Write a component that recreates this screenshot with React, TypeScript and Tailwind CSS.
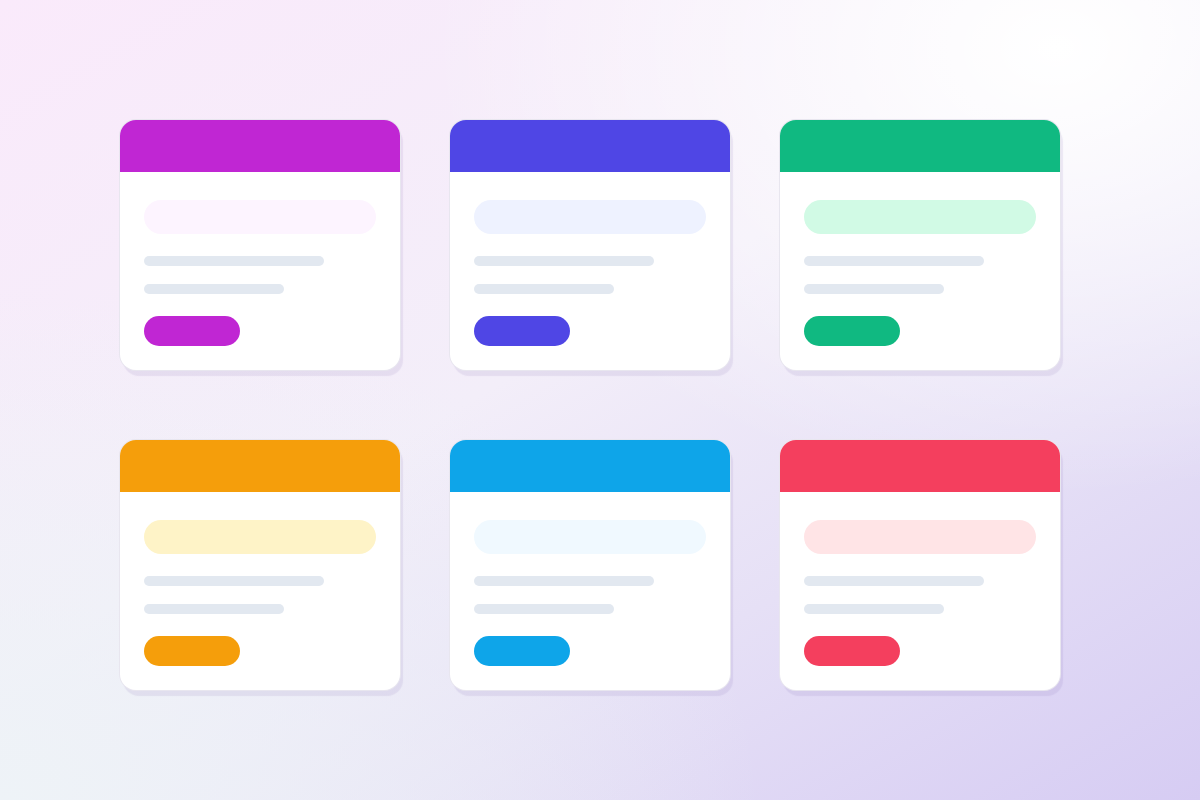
import React from "react";

type Card = { head: string; pill: string; btn: string };

const cards: Card[] = [
  { head: "bg-[#c026d3]", pill: "bg-[#fdf4ff]", btn: "bg-[#c026d3]" },
  { head: "bg-[#4f46e5]", pill: "bg-[#eef2ff]", btn: "bg-[#4f46e5]" },
  { head: "bg-[#10b981]", pill: "bg-[#d1fae5]", btn: "bg-[#10b981]" },
  { head: "bg-[#f59e0b]", pill: "bg-[#fef3c7]", btn: "bg-[#f59e0b]" },
  { head: "bg-[#0ea5e9]", pill: "bg-[#f0f9ff]", btn: "bg-[#0ea5e9]" },
  { head: "bg-[#f43f5e]", pill: "bg-[#ffe4e6]", btn: "bg-[#f43f5e]" },
];

function SkeletonCard({ c }: { c: Card }) {
  return (
    <div className="flex h-[250px] w-[280px] flex-col overflow-hidden rounded-2xl bg-white shadow-[0_0_0_1px_#e8e6ef,3px_6px_1px_rgba(120,100,170,0.12)]">
      <div className={`h-[52px] shrink-0 ${c.head}`} />
      <div className="flex flex-col px-6 pt-7">
        <div className={`h-[34px] w-[232px] rounded-full ${c.pill}`} />
        <div className="mt-[22px] h-[10px] w-[180px] rounded-full bg-[#e2e8f0]" />
        <div className="mt-[18px] h-[10px] w-[140px] rounded-full bg-[#e2e8f0]" />
        <div className={`mt-[22px] h-[30px] w-24 rounded-full ${c.btn}`} />
      </div>
    </div>
  );
}

export default function App() {
  return (
    <div className="h-[800px] w-[1200px] overflow-hidden bg-[radial-gradient(ellipse_at_88%_6%,#ffffff_0%,rgba(255,255,255,0)_42%),radial-gradient(ellipse_at_0%_100%,#eef3f7_0%,rgba(238,243,247,0)_45%),linear-gradient(150deg,#faeafb_0%,#f3eef9_45%,#e6e0f6_70%,#d6ccf3_100%)] pl-[120px] pt-[120px]">
      <div className="grid w-[940px] grid-cols-3 gap-x-[50px] gap-y-[70px]">
        {cards.map((c, i) => (
          <SkeletonCard key={i} c={c} />
        ))}
      </div>
    </div>
  );
}
